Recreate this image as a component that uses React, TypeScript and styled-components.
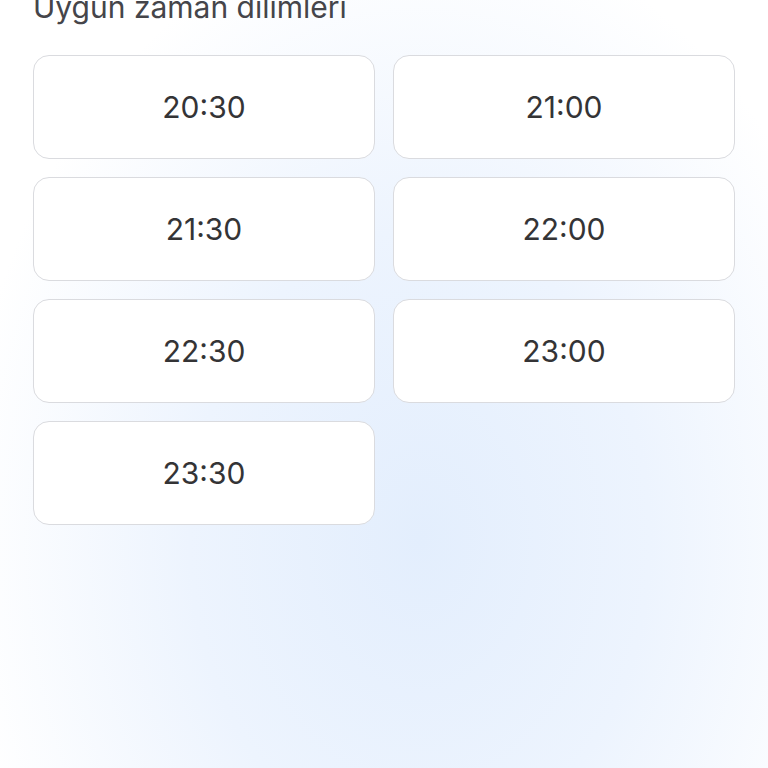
import React from "react";
import styled, { createGlobalStyle } from "styled-components";

const GlobalStyle = createGlobalStyle`
  html, body {
    margin: 0;
    padding: 0;
    height: 100%;
  }
  body {
    font-family: Inter, "Noto Sans", sans-serif;
    background: radial-gradient(
      ellipse 460px 620px at 420px 540px,
      #e3eefd 0%,
      #edf4fe 50%,
      #ffffff 100%
    );
    background-color: #ffffff;
    overflow: hidden;
  }
`;

const Page = styled.div`
  width: 768px;
  height: 768px;
  box-sizing: border-box;
  padding: 0 33px;
  overflow: hidden;
`;

const Title = styled.h2`
  margin: -11px 0 0;
  font-size: 30px;
  font-weight: 400;
  line-height: 36px;
  color: #45454a;
`;

const SlotGrid = styled.div`
  display: grid;
  grid-template-columns: 1fr 1fr;
  gap: 18px;
  margin-top: 30px;
`;

const Slot = styled.button`
  height: 104px;
  border: 1.5px solid #dadbdf;
  border-radius: 16px;
  background: #ffffff;
  font-family: Inter, "Noto Sans", sans-serif;
  font-size: 30px;
  font-weight: 400;
  color: #343436;
  cursor: pointer;
`;

const slots = ["20:30", "21:00", "21:30", "22:00", "22:30", "23:00", "23:30"];

function App() {
  return (
    <>
      <GlobalStyle />
      <Page>
        <Title>Uygun zaman dilimleri</Title>
        <SlotGrid>
          {slots.map((time) => (
            <Slot key={time}>{time}</Slot>
          ))}
        </SlotGrid>
      </Page>
    </>
  );
}

export default App;
